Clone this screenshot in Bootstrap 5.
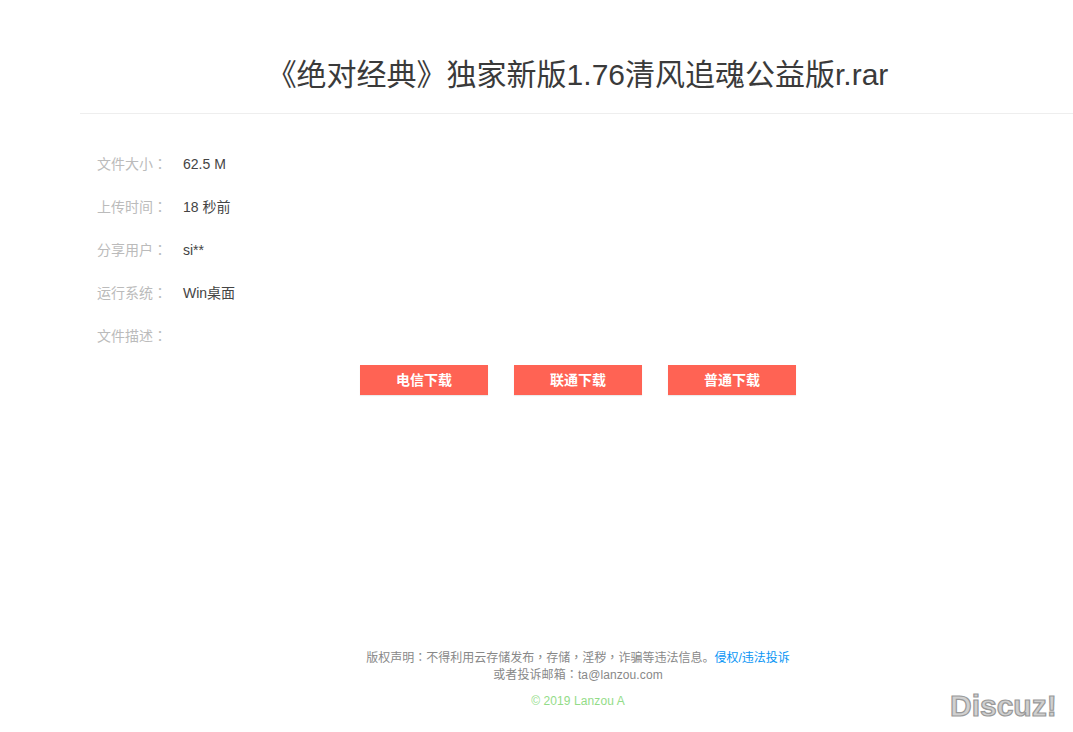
<!DOCTYPE html>
<html lang="zh">
<head>
<meta charset="utf-8">
<title>《绝对经典》独家新版1.76清风追魂公益版r.rar</title>
<link href="https://cdn.jsdelivr.net/npm/bootstrap@5.3.0/dist/css/bootstrap.min.css" rel="stylesheet">
<style>
html,body{height:100%;}
body{font-family:"Liberation Sans","Noto Sans CJK SC",sans-serif;background:#fff;color:#333;overflow:hidden;position:relative;}
.page-wrap{margin-left:80px;height:732px;}
.file-title{font-size:30px;line-height:34px;font-weight:400;color:#3a3a3a;height:114px;padding-top:58px;padding-left:2px;border-bottom:1px solid #eee;margin:0;text-align:center;}
.info-list{padding:29px 0 0 17px;font-size:14px;}
.info-row{height:43px;line-height:43px;}
.info-label{width:86px;color:#bbb;}
.info-val{color:#444;}
.pc{font-family:"Noto Sans CJK TC",sans-serif;line-height:0;}
.dl-row{gap:26px;margin-top:7px;margin-right:-3px;}
.dl-btn{width:128px;height:30px;line-height:30px;padding:0;border:0;border-radius:0;background:#ff6354;color:#fff;font-size:14px;font-weight:700;box-shadow:0 1px 1px rgba(0,0,0,.08);}
.dl-btn:hover{background:#ff6354;color:#fff;}
.foot{position:absolute;left:83px;right:0;top:650px;font-size:12px;line-height:17px;color:#888;text-align:center;}
.foot a{color:#0a96f5;text-decoration:none;}
.foot-mail{letter-spacing:.1px;}
.foot-copy{color:#93dc88;margin-top:9px;letter-spacing:.1px;}
.wm{position:absolute;left:950px;top:687px;font-family:"Liberation Sans",sans-serif;font-weight:700;font-size:30px;line-height:38px;color:#d0d0d0;-webkit-text-stroke:1.2px #999;}
</style>
</head>
<body>
<div class="page-wrap">
  <h1 class="file-title">《绝对经典》独家新版1.76清风追魂公益版r.rar</h1>
  <div class="info-list">
    <div class="info-row d-flex"><span class="info-label">文件大小<span class="pc" lang="zh-TW">：</span></span><span class="info-val">62.5 M</span></div>
    <div class="info-row d-flex"><span class="info-label">上传时间<span class="pc" lang="zh-TW">：</span></span><span class="info-val">18 秒前</span></div>
    <div class="info-row d-flex"><span class="info-label">分享用户<span class="pc" lang="zh-TW">：</span></span><span class="info-val">si**</span></div>
    <div class="info-row d-flex"><span class="info-label">运行系统<span class="pc" lang="zh-TW">：</span></span><span class="info-val">Win桌面</span></div>
    <div class="info-row d-flex"><span class="info-label">文件描述<span class="pc" lang="zh-TW">：</span></span><span class="info-val"></span></div>
  </div>
  <div class="dl-row d-flex justify-content-center">
    <a class="btn dl-btn" href="#">电信下载</a>
    <a class="btn dl-btn" href="#">联通下载</a>
    <a class="btn dl-btn" href="#">普通下载</a>
  </div>
</div>
<div class="foot">
  <div>版权声明<span class="pc" lang="zh-TW">：</span>不得利用云存储发布<span class="pc" lang="zh-TW">，</span>存储<span class="pc" lang="zh-TW">，</span>淫秽<span class="pc" lang="zh-TW">，</span>诈骗等违法信息。<a href="#">侵权/违法投诉</a></div>
  <div class="foot-mail">或者投诉邮箱<span class="pc" lang="zh-TW">：</span>ta@lanzou.com</div>
  <div class="foot-copy">© 2019 Lanzou A</div>
</div>
<div class="wm">Discuz!</div>
<script src="https://cdn.jsdelivr.net/npm/bootstrap@5.3.0/dist/js/bootstrap.bundle.min.js"></script>
</body>
</html>
